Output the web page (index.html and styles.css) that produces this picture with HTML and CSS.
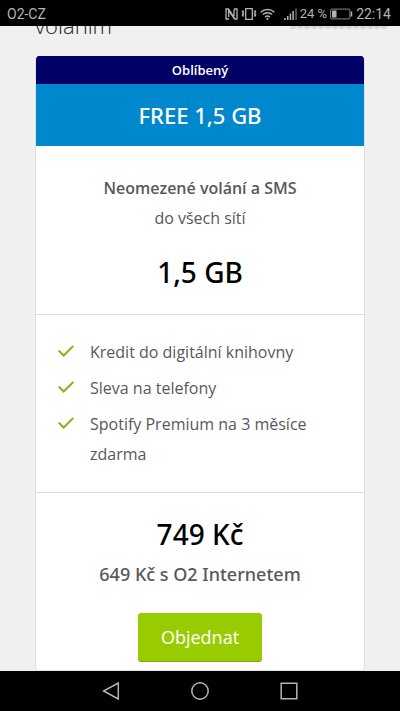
FILE: index.html
```html
<!DOCTYPE html>
<html lang="cs">
<head>
<meta charset="utf-8">
<meta name="viewport" content="width=device-width, initial-scale=1">
<title>FREE 1,5 GB</title>
<link rel="stylesheet" href="styles.css">
</head>
<body>
<header class="status">
  <span class="carrier">O2-CZ</span>
  <div class="indicators">
    <svg class="icon-nfc" width="13" height="12" viewBox="0 0 13 12" aria-hidden="true"><path d="M4 11H1V1h2.500l6 9M9 1h3v10H9.500L3.700 2.500V9M9 1.500V8" fill="none" stroke="currentColor" stroke-width="1.300"/></svg>
    <svg class="icon-vibrate" width="16" height="12" viewBox="0 0 16 12" aria-hidden="true"><path d="M4.700 .7h6.600v10.600H4.700z" fill="none" stroke="currentColor" stroke-width="1.300"/><path d="M2.500 2.500l-1 1.500 1 1.500-1 1.500 1 1.500M13.500 2.500l1 1.500-1 1.500 1 1.500-1 1.500" fill="none" stroke="currentColor" stroke-width="1.500"/></svg>
    <svg class="icon-wifi" width="15" height="12" viewBox="0 0 15 12" aria-hidden="true"><path d="M.7 4.200a10 10 0 0 1 13.600 0M2.800 6.600a7 7 0 0 1 9.400 0M5 9a4 4 0 0 1 5 0" fill="none" stroke="currentColor" stroke-width="1.400"/><circle cx="7.500" cy="10.800" r="1.100" fill="currentColor"/></svg>
    <svg class="icon-signal" width="13" height="12" viewBox="0 0 13 12" aria-hidden="true"><path d="M1 10v2M3.700 8v4M6.400 5.500v6.500M9.100 3v9" stroke="currentColor" stroke-width="1.500"/><path d="M12 .5V12" stroke="#666" stroke-width="1.500"/></svg>
    <span class="percent">24 %</span>
    <svg class="icon-battery" width="23" height="12" viewBox="0 0 23 12" aria-hidden="true"><rect x=".6" y="1.100" width="19.300" height="9.800" rx="1" fill="none" stroke="#888"/><path d="M2 2.500h4.500v7H2z" fill="currentColor"/><path d="M21.500 3.500v5" stroke="currentColor" stroke-width="1.500"/></svg>
    <time>22:14</time>
  </div>
</header>
<main class="page">
  <h1 class="heading">voláním</h1>
  <article class="plan">
    <p class="tag">Oblíbený</p>
    <h2 class="name">FREE 1,5 GB</h2>
    <section class="calls">
      <p class="strong">Neomezené volání a SMS</p>
      <p>do všech sítí</p>
      <p class="amount">1,5 GB</p>
    </section>
    <ul class="perks">
      <li><svg width="16" height="12" viewBox="0 0 16 12" aria-hidden="true"><path d="M.7 5.500l5 5L15.300 1"/></svg>Kredit do digitální knihovny</li>
      <li><svg width="16" height="12" viewBox="0 0 16 12" aria-hidden="true"><path d="M.7 5.500l5 5L15.300 1"/></svg>Sleva na telefony</li>
      <li><svg width="16" height="12" viewBox="0 0 16 12" aria-hidden="true"><path d="M.7 5.500l5 5L15.300 1"/></svg>Spotify Premium na 3 měsíce zdarma</li>
    </ul>
    <section class="price">
      <p class="amount">749 Kč</p>
      <p class="deal">649 Kč s O2 Internetem</p>
      <button class="order" type="button">Objednat</button>
    </section>
  </article>
</main>
<nav class="keys">
  <button type="button" aria-label="Zpět"><svg width="18" height="18" viewBox="0 0 18 18"><path d="M16.300 1v16L1.500 9z"/></svg></button>
  <button type="button" aria-label="Domů"><svg width="18" height="18" viewBox="0 0 18 18"><circle cx="9" cy="9" r="8.200"/></svg></button>
  <button type="button" aria-label="Poslední"><svg width="18" height="18" viewBox="0 0 18 18"><path d="M1.200 1.200h15.600v15.600H1.200z"/></svg></button>
</nav>
</body>
</html>
```
FILE: styles.css
```css
* { box-sizing: border-box; margin: 0; padding: 0; }
body {
  display: flex;
  flex-direction: column;
  height: 100vh;
  background: #f0f0f0;
  color: #58585a;
  font: 16px/30px "Open Sans", sans-serif;
}
.status {
  display: flex;
  flex: none;
  align-items: center;
  justify-content: space-between;
  height: 26px;
  padding: 2px 9px 0 7px;
  background: #000;
  color: #b4b4b4;
  font: 14px/20px Roboto, sans-serif;
}
.percent { font-size: 13px; }
.indicators { display: flex; align-items: center; gap: 3px; }
.icon-wifi { margin-right: 6px; }
.page {
  position: relative;
  flex: 1;
  min-height: 0;
  overflow: hidden;
  padding: 0 35px;
}
/* lower edge of the faint mark that is scrolled under the status bar */
.page::before {
  content: "";
  position: absolute;
  top: 0;
  right: 13px;
  width: 96px;
  height: 2px;
  background: repeating-linear-gradient(90deg, #b8b8b8 0 4px, #e0e0e0 4px 7px);
  filter: blur(1px);
}
.heading {
  margin: -17px 0 15px;
  color: #222;
  font-size: 22px;
  font-weight: 300;
  line-height: 32px;
}
.plan {
  overflow: hidden;
  border: 1px solid #e2e2e2;
  border-top: 0;
  border-radius: 4px;
  background: #fff;
  text-align: center;
}
.tag {
  background: #000066;
  color: #fff;
  font-size: 13px;
  font-weight: 600;
  line-height: 28px;
}
.name {
  background: #0088ce;
  color: #fff;
  font-family: "Noto Sans", sans-serif;
  font-size: 22px;
  font-weight: 500;
  line-height: 62px;
}
.calls { padding: 27px 16px 22px; }
.strong { font-weight: 600; }
.amount {
  color: #000;
  font-family: "Noto Sans", sans-serif;
  font-size: 28px;
  font-weight: 500;
  line-height: 40px;
}
.calls .amount { margin-top: 19px; }
.perks {
  padding: 22px 20px 23px;
  border: solid #dcdcdc;
  border-width: 1px 0;
  list-style: none;
  text-align: left;
}
.perks li { position: relative; padding-left: 34px; }
.perks li + li { margin-top: 6px; }
.perks svg {
  position: absolute;
  top: 8px;
  left: 2px;
  fill: none;
  stroke: #88b418;
  stroke-width: 2;
}
.price { padding: 21px 16px 8px; }
.deal {
  margin-top: 5px;
  font-family: "Noto Sans", sans-serif;
  font-size: 18px;
  font-weight: 500;
}
.order {
  margin-top: 24px;
  padding: 0 23px;
  border: 0;
  border-bottom: 1px solid #80ac08;
  border-radius: 3px;
  background: #99cc00;
  color: #fff;
  font: 18px/48px "Open Sans", sans-serif;
}
.keys {
  display: flex;
  flex: none;
  align-items: center;
  justify-content: center;
  gap: 71px;
  height: 40px;
  background: #000;
}
.keys button { display: flex; border: 0; background: none; }
.keys svg { fill: none; stroke: #b4b4b4; stroke-width: 1.500; }
```
